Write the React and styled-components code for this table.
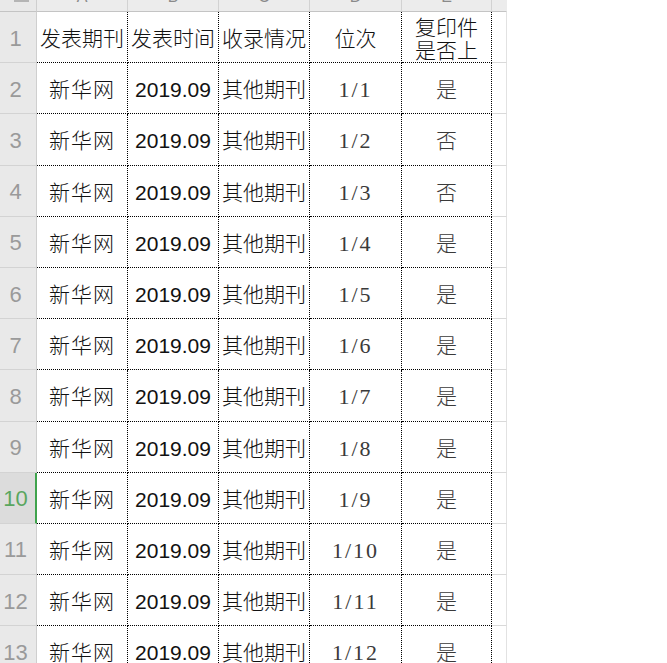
import React from 'react';
import styled, { createGlobalStyle } from 'styled-components';

const GlobalStyle = createGlobalStyle`
    html, body {
        margin: 0;
        padding: 0;
        background: #ffffff;
    }
`;

const ROW_H = '51.2px';

const Page = styled.div`
    width: 667px;
    height: 663px;
    overflow: hidden;
    background: #fff;
`;

const Sheet = styled.div`
    display: grid;
    grid-template-columns: 37px 91px 91px 91px 92px 90px 15px;
    grid-template-rows: 12px repeat(13, ${ROW_H});
    width: 507px;
    font-family: 'Liberation Sans', 'Noto Sans CJK SC', sans-serif;
`;

const Corner = styled.div`
    box-sizing: border-box;
    background: #e9e9e9;
    border-right: 1px solid #cfcfcf;
    border-bottom: 1px solid #c4c4c4;
    display: flex;
    justify-content: center;
`;

const CornerMark = styled.div`
    width: 15px;
    height: 2px;
    margin-left: 6px;
    background: #b5b5b5;
`;

const ColHead = styled.div`
    box-sizing: border-box;
    background: #ececec;
    border-right: 1px solid ${p => (p.$last ? '#ececec' : '#d2d2d2')};
    border-bottom: 1px solid #c4c4c4;
    overflow: hidden;
    display: flex;
    justify-content: center;
    align-items: flex-start;
`;

const Letter = styled.span`
    font-size: 16px;
    line-height: 16px;
    margin-top: -11px;
    color: #8a8a8a;
`;

const RowHead = styled.div`
    box-sizing: border-box;
    background: ${p => (p.$active ? '#dcdcdc' : '#e9e9e9')};
    border-bottom: 1px solid #d3d3d3;
    border-right: ${p => (p.$active ? '2px solid #3fa34d' : '1px solid #cfcfcf')};
    color: ${p => (p.$active ? '#5aa65f' : '#9a9a9a')};
    font-size: 22px;
    padding-top: 3px;
    display: flex;
    align-items: center;
    justify-content: center;
    padding-right: ${p => (p.$active ? '4px' : '5px')};
`;

const Cell = styled.div`
    box-sizing: border-box;
    border-right: 1px dotted #000;
    border-bottom: 1px dotted #000;
    display: flex;
    flex-direction: column;
    align-items: center;
    justify-content: center;
    white-space: nowrap;
    overflow: visible;
    font-size: ${p => (p.$serif ? '22px' : '21px')};
    font-weight: ${p => (p.$latin ? 400 : 300)};
    line-height: 23px;
    padding-top: 3px;
    letter-spacing: ${p => (p.$serif ? '2px' : p.$spaced ? '1px' : '0')};
    color: ${p => (p.$muted ? '#3a3a3a' : '#111')};
    font-family: ${p =>
        p.$serif
            ? "'Liberation Serif', 'Noto Sans CJK SC', serif"
            : "'Liberation Sans', 'Noto Sans CJK SC', sans-serif"};
`;

const EdgeCell = styled.div`
    box-sizing: border-box;
    border-bottom: 1px solid #d9d9d9;
    border-right: 1px solid #e2e2e2;
`;

const headers = ['发表期刊', '发表时间', '收录情况', '位次'];
const copies = ['是', '否', '否', '是', '是', '是', '是', '是', '是', '是', '是', '是'];

const rows = copies.map((c, i) => ({
    n: i + 2,
    journal: '新华网',
    date: '2019.09',
    index: '其他期刊',
    rank: `1/${i + 1}`,
    copy: c,
}));

export default function App() {
    return (
        <Page>
            <GlobalStyle />
            <Sheet>
                <Corner>
                    <CornerMark />
                </Corner>
                {['A', 'B', 'C', 'D', 'E', ''].map((l, i) => (
                    <ColHead key={`col-${i}`} $last={i === 5}>
                        <Letter>{l}</Letter>
                    </ColHead>
                ))}

                {/* HEADER ROW */}
                <RowHead>1</RowHead>
                {headers.map(h => (
                    <Cell key={h}>{h}</Cell>
                ))}
                <Cell>
                    <span>复印件</span>
                    <span>是否上</span>
                </Cell>
                <EdgeCell />

                {/* DATA ROWS */}
                {rows.map(r => (
                    <React.Fragment key={`row-${r.n}`}>
                        <RowHead $active={r.n === 10}>{r.n}</RowHead>
                        <Cell $spaced>{r.journal}</Cell>
                        <Cell $latin>{r.date}</Cell>
                        <Cell>{r.index}</Cell>
                        <Cell $serif $muted $latin>{r.rank}</Cell>
                        <Cell $muted>{r.copy}</Cell>
                        <EdgeCell />
                    </React.Fragment>
                ))}
            </Sheet>
        </Page>
    );
}
